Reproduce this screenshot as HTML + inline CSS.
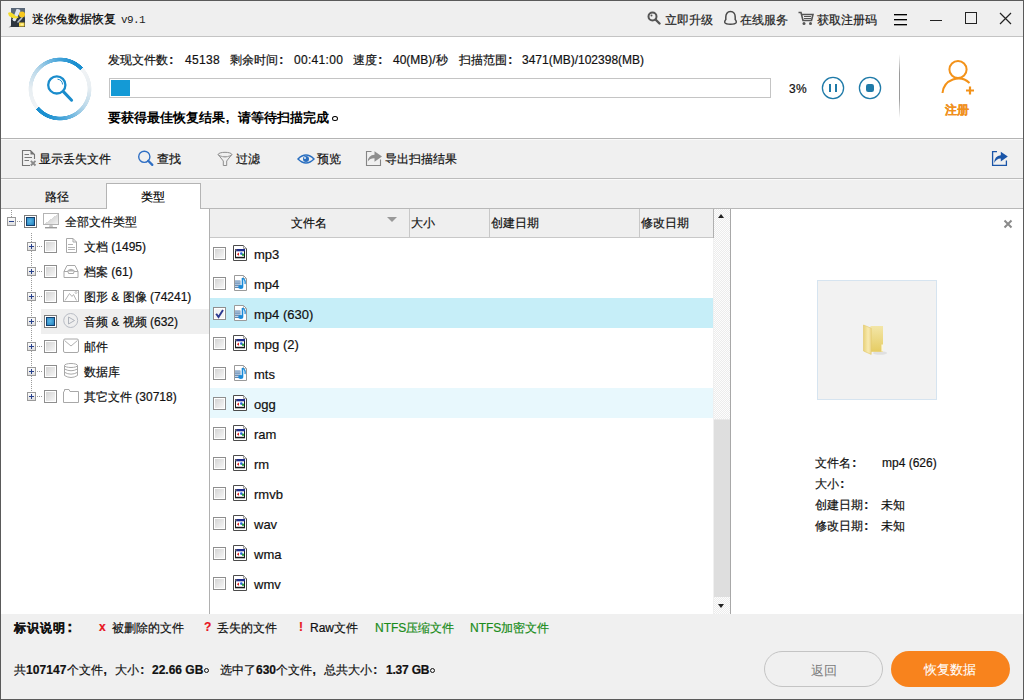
<!DOCTYPE html>
<html><head><meta charset="utf-8">
<style>
*{margin:0;padding:0;box-sizing:border-box}
html,body{width:1024px;height:700px;overflow:hidden;background:#f0f0f0}
body{position:relative;font-family:"Liberation Sans",sans-serif;font-size:12px;color:#111;-webkit-text-stroke:0.2px currentColor}
.a{position:absolute}
.t{position:absolute;white-space:nowrap;line-height:1}
.cb{position:absolute;width:13px;height:13px;border:1px solid #8f8f8f;background:linear-gradient(135deg,#dcdcdc,#fafafa)}
.cb::after{content:"";position:absolute;left:1px;top:1px;right:1px;bottom:1px;border:1px solid #f4f4f4}

.eb{position:absolute;width:9px;height:9px;border:1px solid #9a9a9a;background:linear-gradient(#fdfdfd,#dedede)}
.eb i{position:absolute;left:1px;top:3px;width:5px;height:1px;background:#27408b}
.eb b{position:absolute;left:3px;top:1px;width:1px;height:5px;background:#27408b}
.dv{position:absolute;width:1px;background:repeating-linear-gradient(#9a9a9a 0 1px,transparent 1px 2px)}
.dh{position:absolute;height:1px;background:repeating-linear-gradient(90deg,#9a9a9a 0 1px,transparent 1px 2px)}
.cbx{position:absolute;width:13px;height:13px;border:1px solid #8e8e8e;background:#fff}
.cbx::after{content:"";position:absolute;left:1px;top:1px;width:9px;height:9px;background:linear-gradient(135deg,#d4d4d4,#f6f6f6)}
.cbx.on::after{background:radial-gradient(circle at 45% 45%,#5ab8e8,#2a86c0 70%,#1d5f96);box-shadow:inset 0 0 0 1px #16406e}
.cbx.on{border-color:#7a7a7a}
.cbx.on2::after{background:#f4f4f4}
.tx{position:absolute;white-space:nowrap;line-height:1;font-size:12px;color:#111}
.row{position:absolute;left:210px;width:503px;height:30px}
.cl{display:inline-block;width:1em;padding-left:0.1em;font-weight:bold;font-family:"Liberation Sans",sans-serif}
.cm{display:inline-block;width:1em;padding-left:0.05em;font-weight:bold;font-family:"Liberation Sans",sans-serif}
</style></head><body>
<!-- window border -->
<div class="a" style="left:0;top:0;width:1024px;height:700px;border:1px solid #5a5a5a;z-index:50;pointer-events:none"></div>

<!-- title bar -->
<div class="a" style="left:0;top:0;width:1024px;height:36px;background:#efefef"></div>
<div class="a" style="left:0;top:36px;width:1024px;height:1px;background:#c4c4c4"></div>

<!-- header -->
<div class="a" style="left:0;top:37px;width:1024px;height:101px;background:#fff"></div>
<div class="a" style="left:0;top:138px;width:1024px;height:1px;background:#b4b4b4"></div>

<!-- toolbar -->
<div class="a" style="left:0;top:139px;width:1024px;height:39px;background:#f0f0f0"></div>
<div class="a" style="left:0;top:139px;width:1024px;height:1px;background:#fafafa"></div>
<div class="a" style="left:0;top:178px;width:1024px;height:1px;background:#bcbcbc"></div>

<!-- tabs -->
<div class="a" style="left:0;top:179px;width:1024px;height:1px;background:#fafafa"></div>
<div class="a" style="left:106px;top:183px;width:95px;height:26px;background:#fff;border:1px solid #b4b4b4;border-bottom:none;z-index:2"></div>

<!-- panels -->
<div class="a" style="left:0;top:208px;width:1024px;height:1px;background:#b8b8b8"></div>
<div class="a" style="left:1px;top:209px;width:208px;height:405px;background:#fff"></div>
<div class="a" style="left:209px;top:209px;width:1px;height:405px;background:#b0b0b0"></div>
<div class="a" style="left:210px;top:209px;width:503px;height:405px;background:#fff"></div>
<div class="a" style="left:210px;top:209px;width:503px;height:28px;background:#efefef"></div>
<div class="a" style="left:210px;top:237px;width:503px;height:1px;background:#c8c8c8"></div>
<div class="a" style="left:714px;top:209px;width:16px;height:405px;background:repeating-conic-gradient(#fdfdfd 0 25%,#ececec 0 50%) 0 0/2px 2px"></div>
<div class="a" style="left:730px;top:209px;width:1px;height:405px;background:#a8a8a8"></div>
<div class="a" style="left:731px;top:209px;width:292px;height:405px;background:#fff"></div>


<!-- ===== TITLE BAR ===== -->
<div class="a" id="appicon" style="left:8px;top:8px;width:18px;height:20px">
<svg width="18" height="20" viewBox="0 0 18 20">
<rect x="3" y="0" width="14" height="19" fill="#2e3640"/>
<path d="M3 0 L17 0 L17 10 Q12 4 5 8 L3 12 Z" fill="#5a6878"/>
<path d="M8.5 1 Q12 0.5 12.5 3 L7.5 13 Q5 14 4.5 11.5 Z" fill="#dfe4ee"/>
<path d="M9 14 L14.5 8 Q15.5 9 14 11 L10 15 Z" fill="#b8c2cc"/>
<path d="M0 5 Q2 3.5 4 5 Q7 8 11 9 L8.5 10.5 Q4 10.5 1 8 Z" fill="#f4dc2a"/>
<circle cx="14" cy="6.5" r="3" fill="#f8c81e"/>
<rect x="11" y="14.5" width="5.5" height="4" fill="#f8d43a"/>
<rect x="12.5" y="15.5" width="3" height="2" fill="#fff3a0"/>
<path d="M0.5 19.5 L3 17.5 L3 19 Z" fill="#777"/>
</svg></div>
<div class="t" id="title" style="left:32px;top:13px;font-size:12px;color:#000">迷你兔数据恢复 </div><div class="t" style="left:121px;top:15px;font-family:'Liberation Mono',monospace;font-size:11px;-webkit-text-stroke:0;color:#222;letter-spacing:-0.6px">v9.1</div>

<div class="a" style="left:647px;top:11px;width:14px;height:14px">
<svg width="14" height="14" viewBox="0 0 14 14"><circle cx="5.5" cy="5.5" r="4" fill="none" stroke="#555" stroke-width="2"/><path d="M8.5 8.5 L12.5 12.5" stroke="#555" stroke-width="2.4" stroke-linecap="round"/><circle cx="4.5" cy="4.5" r="1" fill="#555"/></svg></div>
<div class="t" style="left:665px;top:14px;color:#222">立即升级</div>
<div class="a" style="left:723px;top:10px;width:15px;height:16px">
<svg width="15" height="16" viewBox="0 0 15 16"><path d="M7.5 1.6 C4.2 1.6 2.8 4.2 2.8 7 L2.8 9.6 C1.9 10.6 1.4 11.6 1.8 12.6 C2.6 14 4.5 14.2 7.5 14.2 C10.5 14.2 12.4 14 13.2 12.6 C13.6 11.6 13.1 10.6 12.2 9.6 L12.2 7 C12.2 4.2 10.8 1.6 7.5 1.6 Z" fill="none" stroke="#4a4a4a" stroke-width="1.5"/></svg></div>
<div class="t" style="left:740px;top:14px;color:#222">在线服务</div>
<div class="a" style="left:798px;top:11px;width:16px;height:15px">
<svg width="16" height="15" viewBox="0 0 16 15"><path d="M0.5 1.5 L3 1.5 L5 9.5 L13.5 9.5 L15 3.5 L4 3.5" fill="none" stroke="#555" stroke-width="1.6"/><path d="M6 5.5 L13 5.5 M6 7.5 L13 7.5" stroke="#555" stroke-width="1.2"/><circle cx="6" cy="12.5" r="1.5" fill="#555"/><circle cx="12.5" cy="12.5" r="1.5" fill="#555"/></svg></div>
<div class="t" style="left:817px;top:14px;color:#222">获取注册码</div>

<div class="a" style="left:894px;top:14px;width:13px;height:2px;background:linear-gradient(#000 0 50%,#999 50%)"></div>
<div class="a" style="left:894px;top:19px;width:13px;height:2px;background:linear-gradient(#000 0 50%,#999 50%)"></div>
<div class="a" style="left:894px;top:24px;width:13px;height:2px;background:linear-gradient(#000 0 50%,#999 50%)"></div>
<div class="a" style="left:930px;top:20px;width:12px;height:1px;background:#222"></div>
<div class="a" style="left:965px;top:12px;width:12px;height:12px;border:1px solid #222"></div>
<div class="a" style="left:999px;top:12px;width:13px;height:13px">
<svg width="13" height="13" viewBox="0 0 13 13"><path d="M1 1 L12 12 M12 1 L1 12" stroke="#222" stroke-width="1.2"/></svg></div>

<!-- ===== HEADER ===== -->
<div class="a" style="left:27px;top:56px;width:66px;height:66px;border-radius:50%;background:conic-gradient(from 47deg,#f2f4f6 0deg,#e8eef2 40deg,#b9d8ea 80deg,#4aa6da 125deg,#1a8fd0 160deg,#1a8fd0 183deg,#f2f4f6 183deg,#e8eef2 223deg,#b9d8ea 263deg,#4aa6da 308deg,#1a8fd0 343deg,#1a8fd0 360deg);-webkit-mask:radial-gradient(circle at 50% 50%,transparent 0 27.3px,#000 27.8px 31.2px,transparent 31.7px)"></div>
<div class="a" style="left:27px;top:56px;width:66px;height:66px">
<svg width="66" height="66" viewBox="0 0 66 66">
<circle cx="29.8" cy="28.9" r="8.6" fill="none" stroke="#1a8ccc" stroke-width="2.3"/>
<path d="M30.5 23.2 A5.8 5.8 0 0 1 35.6 28.5" fill="none" stroke="#1a8ccc" stroke-width="1"/>
<path d="M36.4 35.6 L44.6 44.2" stroke="#1a8ccc" stroke-width="3" stroke-linecap="round"/>
</svg></div>

<div class="t" style="left:108px;top:54px;font-size:12px">发现文件数<span class="cl">:</span></div>
<div class="t" style="left:185px;top:54px;font-size:12px;letter-spacing:0.3px">45138</div>
<div class="t" style="left:230px;top:54px;font-size:12px">剩余时间<span class="cl">:</span></div>
<div class="t" style="left:294px;top:54px;font-size:12px;letter-spacing:0.3px">00:41:00</div>
<div class="t" style="left:353px;top:54px;font-size:12px">速度<span class="cl">:</span></div>
<div class="t" style="left:393px;top:54px;font-size:12px">40(MB)/秒</div>
<div class="t" style="left:459px;top:54px;font-size:12px">扫描范围<span class="cl">:</span></div>
<div class="t" style="left:522px;top:54px;font-size:12px">3471(MB)/102398(MB)</div>

<div class="a" style="left:109px;top:78px;width:662px;height:20px;border:1px solid #c4c4c4;background:#fff"></div>
<div class="a" style="left:111px;top:80px;width:19px;height:16px;background:#149ad6"></div>
<div class="t" style="left:789px;top:83px;font-size:12px;letter-spacing:0.3px">3%</div>

<div class="a" style="left:821px;top:76px;width:24px;height:24px">
<svg width="24" height="24" viewBox="0 0 24 24"><circle cx="12" cy="12" r="10.6" fill="none" stroke="#1f7aa8" stroke-width="1.3"/><rect x="8" y="8" width="2" height="8" fill="#1f7aa8"/><rect x="14" y="8" width="2" height="8" fill="#1f7aa8"/></svg></div>
<div class="a" style="left:858px;top:76px;width:24px;height:24px">
<svg width="24" height="24" viewBox="0 0 24 24"><circle cx="12" cy="12" r="10.6" fill="none" stroke="#1f7aa8" stroke-width="1.3"/><rect x="8" y="8" width="8" height="8" rx="2.2" fill="#1f7aa8"/></svg></div>

<div class="a" style="left:899px;top:54px;width:1px;height:64px;background:linear-gradient(#fff,#9a9a9a 30%,#9a9a9a 70%,#fff)"></div>

<div class="a" style="left:940px;top:58px;width:36px;height:38px">
<svg width="36" height="38" viewBox="0 0 36 38"><circle cx="18" cy="11.5" r="8.6" fill="none" stroke="#f39219" stroke-width="2"/><path d="M2.5 35 A 16 16 0 0 1 29.5 25" fill="none" stroke="#f39219" stroke-width="2"/><path d="M26 32.5 L34 32.5 M30 28.5 L30 36.5" stroke="#f39219" stroke-width="2.2"/></svg></div>
<div class="t" style="left:945px;top:104px;font-size:12px;font-weight:bold;color:#f0901c">注册</div>

<div class="t" style="left:108px;top:111px;font-size:13px;font-weight:bold;color:#000;-webkit-text-stroke:0">要获得最佳恢复结果<span class="cm">,</span>请等待扫描完成</div><div class="a" style="left:332px;top:116px;width:5.5px;height:5px;border:1.8px solid #000;border-radius:50%"></div>


<!-- ===== TOOLBAR ===== -->
<div class="a" style="left:21px;top:149px;width:17px;height:18px"><svg width="17" height="18" viewBox="0 0 17 18"><path d="M13.5 10 L13.5 5.5 L9.5 1.5 L1.5 1.5 L1.5 16.5 L9 16.5" fill="none" stroke="#747474" stroke-width="1.1"/><path d="M9.5 1.5 L13.5 5.5 L9.5 5.5 Z" fill="#747474"/><path d="M3.5 5.5 L8 5.5 M3.5 8.5 L11 8.5 M3.5 11.5 L8 11.5" stroke="#7a7a7a" stroke-width="1"/><path d="M9.8 11.8 L14.5 16.5 M14.5 11.8 L9.8 16.5" stroke="#8a8a8a" stroke-width="1.8"/></svg></div>
<div class="t" style="left:39px;top:153px">显示丢失文件</div>
<div class="a" style="left:137px;top:150px;width:17px;height:17px"><svg width="17" height="17" viewBox="0 0 17 17"><circle cx="7.3" cy="6.8" r="5.6" fill="none" stroke="#2f6fc4" stroke-width="1.4"/><path d="M11.2 10.8 L15.3 14.9" stroke="#2f6fc4" stroke-width="2.3" stroke-linecap="round"/></svg></div>
<div class="t" style="left:157px;top:153px">查找</div>
<div class="a" style="left:217px;top:151px;width:16px;height:16px"><svg width="16" height="16" viewBox="0 0 16 16"><ellipse cx="8" cy="3.5" rx="6.8" ry="2.2" fill="none" stroke="#8e8e8e" stroke-width="1"/><path d="M1.2 3.5 L6.3 10 L6.3 14.5 L9.7 14.5 L9.7 10 L14.8 3.5" fill="none" stroke="#8e8e8e" stroke-width="1"/><path d="M3 5 Q8 7.5 13 5" fill="none" stroke="#b8b8b8" stroke-width="0.8"/></svg></div>
<div class="t" style="left:236px;top:153px">过滤</div>
<div class="a" style="left:297px;top:153px;width:18px;height:12px">
<svg width="18" height="12" viewBox="0 0 18 12"><path d="M1 6 Q9 -2 17 6 Q9 14 1 6 Z" fill="none" stroke="#2a6fc0" stroke-width="1.5"/><circle cx="9" cy="6" r="3" fill="#2a6fc0"/><circle cx="8" cy="5" r="0.9" fill="#fff"/></svg></div>
<div class="t" style="left:317px;top:153px">预览</div>
<div class="a" style="left:365px;top:150px;width:18px;height:17px"><svg width="18" height="17" viewBox="0 0 18 17"><path d="M6.5 1.5 L1.5 1.5 L1.5 15.5 L15.5 15.5 L15.5 9.5" fill="none" stroke="#858585" stroke-width="1.1"/><path d="M2.8 11.5 Q3.2 5.2 9.5 4.8 L9.5 1.2 L17 6.5 L9.5 11.8 L9.5 8.2 Q5.2 8 2.8 11.5 Z" fill="#8e8e8e"/></svg></div>
<div class="t" style="left:385px;top:153px">导出扫描结果</div>
<div class="a" style="left:991px;top:150px;width:18px;height:17px"><svg width="18" height="17" viewBox="0 0 18 17"><path d="M6 1.6 L1.6 1.6 L1.6 15.4 L15.4 15.4 L15.4 10.5" fill="none" stroke="#1a55a8" stroke-width="1.3"/><path d="M3.2 13 Q3.4 5.8 9.8 5.2 L9.8 1.8 L16.8 6.6 L9.8 11.6 L9.8 8.4 Q5.6 8.2 3.2 13 Z" fill="#1a55a8"/></svg></div>

<!-- ===== TABS ===== -->
<div class="t" style="left:45px;top:191px">路径</div>
<div class="t" style="left:141px;top:191px;color:#000;z-index:3">类型</div>


<!-- ===== TREE ===== -->
<div class="a" style="left:41px;top:309px;width:168px;height:25px;background:#efefef"></div>
<div class="dv" style="left:11px;top:210px;height:7px"></div>
<div class="eb" style="left:7px;top:217px"><i></i></div>
<div class="dh" style="left:17px;top:221px;height:1px;width:6px"></div>
<div class="cbx on" style="left:24px;top:215px"></div>
<div class="a" style="left:43px;top:213px;width:16px;height:16px"><svg width="16" height="16" viewBox="0 0 16 16"><defs><linearGradient id="mg" x1="0" y1="0" x2="1" y2="1"><stop offset="0" stop-color="#fff"/><stop offset="0.5" stop-color="#fff"/><stop offset="0.5" stop-color="#d8d8d8"/><stop offset="1" stop-color="#f4f4f4"/></linearGradient></defs><rect x="0.5" y="0.5" width="15" height="11" fill="url(#mg)" stroke="#b4b4b4"/><path d="M6.5 12 L9.5 12 L10 14 L6 14 Z" fill="#c8c8c8"/><rect x="2" y="14" width="12" height="1.4" fill="#9a9a9a"/></svg></div>
<div class="tx" style="left:65px;top:216px">全部文件类型</div>
<div class="eb" style="left:27px;top:242px"><i></i><b></b></div>
<div class="dh" style="left:37px;top:246px;width:5px"></div>
<div class="cbx" style="left:44px;top:240px"></div>
<div class="a" style="left:63px;top:238px;width:16px;height:16px"><svg width="16" height="16" viewBox="0 0 16 16"><path d="M3.5 0.5 L10 0.5 L13.5 4 L13.5 14.5 L3.5 14.5 Z" fill="#fff" stroke="#a8a8a8"/><path d="M10 0.5 L10 4 L13.5 4" fill="none" stroke="#a8a8a8"/><path d="M5 6.5 L10 6.5 M5 9.5 L12 9.5 M5 11.5 L12 11.5" stroke="#b4b4b4"/></svg></div>
<div class="tx" style="left:84px;top:241px">文档 (1495)</div>
<div class="eb" style="left:27px;top:267px"><i></i><b></b></div>
<div class="dh" style="left:37px;top:271px;width:5px"></div>
<div class="cbx" style="left:44px;top:265px"></div>
<div class="a" style="left:63px;top:263px;width:16px;height:16px"><svg width="16" height="16" viewBox="0 0 16 16"><path d="M4 2.5 L12 2.5 L15 8.5 L15 14.5 L1 14.5 L1 8.5 Z" fill="#fff" stroke="#a8a8a8"/><path d="M3.5 8.5 Q8 3 12.5 8.5 Z" fill="#b4b4b4"/><path d="M1 8.5 L5 8.5 L5.5 10.5 L10.5 10.5 L11 8.5 L15 8.5" fill="none" stroke="#a8a8a8"/></svg></div>
<div class="tx" style="left:84px;top:266px">档案 (61)</div>
<div class="eb" style="left:27px;top:292px"><i></i><b></b></div>
<div class="dh" style="left:37px;top:296px;width:5px"></div>
<div class="cbx" style="left:44px;top:290px"></div>
<div class="a" style="left:63px;top:288px;width:16px;height:16px"><svg width="16" height="16" viewBox="0 0 16 16"><rect x="0.5" y="2.5" width="15" height="11" fill="#fff" stroke="#a8a8a8"/><path d="M2 12.5 L6.5 5.5 L9 8.5 L10.5 6.5 L13.5 12.5" fill="none" stroke="#b4b4b4"/><circle cx="13" cy="4.5" r="1" fill="none" stroke="#b4b4b4" stroke-width="0.8"/></svg></div>
<div class="tx" style="left:84px;top:291px">图形 &amp; 图像 (74241)</div>
<div class="eb" style="left:27px;top:317px"><i></i><b></b></div>
<div class="dh" style="left:37px;top:321px;width:5px"></div>
<div class="cbx on" style="left:44px;top:315px"></div>
<div class="a" style="left:63px;top:313px;width:16px;height:16px"><svg width="16" height="16" viewBox="0 0 16 16"><circle cx="7.7" cy="7.5" r="7" fill="none" stroke="#b8bcc4" stroke-width="1"/><path d="M5.5 4 L11.5 7.5 L5.5 11 Z" fill="none" stroke="#b0b4bc" stroke-width="1"/></svg></div>
<div class="tx" style="left:84px;top:316px">音频 &amp; 视频 (632)</div>
<div class="eb" style="left:27px;top:342px"><i></i><b></b></div>
<div class="dh" style="left:37px;top:346px;width:5px"></div>
<div class="cbx" style="left:44px;top:340px"></div>
<div class="a" style="left:63px;top:338px;width:16px;height:16px"><svg width="16" height="16" viewBox="0 0 16 16"><rect x="0.5" y="1" width="15" height="13.5" rx="1.5" fill="#fff" stroke="#a8a8a8"/><path d="M1.5 2.5 L8 8 L14.5 2.5" fill="none" stroke="#b0b0b0"/></svg></div>
<div class="tx" style="left:84px;top:341px">邮件</div>
<div class="eb" style="left:27px;top:367px"><i></i><b></b></div>
<div class="dh" style="left:37px;top:371px;width:5px"></div>
<div class="cbx" style="left:44px;top:365px"></div>
<div class="a" style="left:63px;top:363px;width:16px;height:16px"><svg width="16" height="16" viewBox="0 0 16 16"><ellipse cx="8" cy="2.5" rx="6.5" ry="2" fill="#fff" stroke="#a8a8a8"/><path d="M1.5 2.5 L1.5 12.5 Q8 16.5 14.5 12.5 L14.5 2.5 M1.5 6 Q8 9.5 14.5 6 M1.5 9.3 Q8 13 14.5 9.3" fill="none" stroke="#a8a8a8"/></svg></div>
<div class="tx" style="left:84px;top:366px">数据库</div>
<div class="eb" style="left:27px;top:392px"><i></i><b></b></div>
<div class="dh" style="left:37px;top:396px;width:5px"></div>
<div class="cbx" style="left:44px;top:390px"></div>
<div class="a" style="left:63px;top:388px;width:16px;height:16px"><svg width="16" height="16" viewBox="0 0 16 16"><path d="M0.5 3.5 L0.5 14.5 L15.5 14.5 L15.5 3.5 L7 3.5 L6 1.5 L1.5 1.5 L1.5 3.5" fill="#fff" stroke="#a8a8a8"/></svg></div>
<div class="tx" style="left:84px;top:391px">其它文件 (30718)</div>
<div class="dv" style="left:31px;top:233px;height:9px"></div>
<div class="dv" style="left:31px;top:251px;height:16px"></div>
<div class="dv" style="left:31px;top:276px;height:16px"></div>
<div class="dv" style="left:31px;top:301px;height:16px"></div>
<div class="dv" style="left:31px;top:326px;height:16px"></div>
<div class="dv" style="left:31px;top:351px;height:16px"></div>
<div class="dv" style="left:31px;top:376px;height:16px"></div>

<!-- ===== LIST ===== -->
<div class="row" style="top:298px;background:#c6eef8"></div>
<div class="row" style="top:388px;background:#e8f8fd"></div>
<div class="a" style="left:409px;top:209px;width:1px;height:28px;background:#c8c8c8"></div>
<div class="a" style="left:489px;top:209px;width:1px;height:28px;background:#c8c8c8"></div>
<div class="a" style="left:639px;top:209px;width:1px;height:28px;background:#c8c8c8"></div>
<div class="a" style="left:713px;top:209px;width:1px;height:29px;background:#b0b0b0"></div>
<div class="tx" style="left:291px;top:217px">文件名</div>
<div class="a" style="left:387px;top:217px;width:0;height:0;border-left:5px solid transparent;border-right:5px solid transparent;border-top:5px solid #999"></div>
<div class="tx" style="left:411px;top:217px">大小</div>
<div class="tx" style="left:491px;top:217px">创建日期</div>
<div class="tx" style="left:641px;top:217px">修改日期</div>
<div class="cbx" style="left:213px;top:247px"></div>
<div class="a" style="left:232px;top:245px;width:16px;height:17px"><svg width="16" height="17" viewBox="0 0 16 17"><path d="M1.5 0.5 L11.5 0.5 L14.5 3.5 L14.5 15.5 L1.5 15.5 Z" fill="#fff" stroke="#4a4a4a"/><path d="M11.5 0.5 L11.5 3.5 L14.5 3.5" fill="#e8e8e8" stroke="#888" stroke-width="0.8"/><rect x="3.5" y="4.5" width="9" height="8" fill="#fff" stroke="#1a1a1a" stroke-width="1"/><rect x="3" y="4" width="10" height="2.3" fill="#1c2a8a"/><rect x="3" y="11.8" width="10" height="1.5" fill="#1a1a1a"/><path d="M4.8 9.2 L7 7.6 L7 10.8 Z" fill="#d42020"/><circle cx="9.3" cy="8.6" r="1.3" fill="#2a62d8"/><circle cx="11" cy="9.8" r="1.2" fill="#28a040"/><rect x="3.5" y="4.5" width="1" height="1" fill="#fc0"/></svg></div>
<div class="tx" style="left:254px;top:248px;font-size:13px">mp3</div>
<div class="cbx" style="left:213px;top:277px"></div>
<div class="a" style="left:232px;top:275px;width:16px;height:17px"><svg width="16" height="17" viewBox="0 0 16 17"><path d="M2.5 0.5 L11.5 0.5 L14.5 3.5 L14.5 15.5 L2.5 15.5 Z" fill="#fff" stroke="#9a9a9a"/><path d="M11.5 0.5 L11.5 3.5 L14.5 3.5" fill="none" stroke="#aaa" stroke-width="0.8"/><rect x="3" y="5.5" width="5.5" height="7.5" fill="#5f86b0"/><path d="M3 7 L8.5 7 M3 9.2 L8.5 9.2 M3 11.4 L8.5 11.4" stroke="#dce8f4" stroke-width="0.9"/><path d="M10.5 3 L10.5 11.5" stroke="#1a8ad8" stroke-width="1.6"/><ellipse cx="8.8" cy="12" rx="2.6" ry="2.1" fill="#1a8ad8"/><path d="M10.5 3 Q14 5 13 9" fill="none" stroke="#1a8ad8" stroke-width="1.3"/></svg></div>
<div class="tx" style="left:254px;top:278px;font-size:13px">mp4</div>
<div class="cbx on2" style="left:213px;top:307px"></div><div class="a" style="left:213px;top:307px;width:13px;height:13px"><svg width="13" height="13" viewBox="0 0 13 13"><path d="M3.2 6.8 L5.5 10 L10 3" fill="none" stroke="#2b3990" stroke-width="1.9"/></svg></div>
<div class="a" style="left:232px;top:305px;width:16px;height:17px"><svg width="16" height="17" viewBox="0 0 16 17"><path d="M2.5 0.5 L11.5 0.5 L14.5 3.5 L14.5 15.5 L2.5 15.5 Z" fill="#fff" stroke="#9a9a9a"/><path d="M11.5 0.5 L11.5 3.5 L14.5 3.5" fill="none" stroke="#aaa" stroke-width="0.8"/><rect x="3" y="5.5" width="5.5" height="7.5" fill="#5f86b0"/><path d="M3 7 L8.5 7 M3 9.2 L8.5 9.2 M3 11.4 L8.5 11.4" stroke="#dce8f4" stroke-width="0.9"/><path d="M10.5 3 L10.5 11.5" stroke="#1a8ad8" stroke-width="1.6"/><ellipse cx="8.8" cy="12" rx="2.6" ry="2.1" fill="#1a8ad8"/><path d="M10.5 3 Q14 5 13 9" fill="none" stroke="#1a8ad8" stroke-width="1.3"/></svg></div>
<div class="tx" style="left:254px;top:308px;font-size:13px">mp4 (630)</div>
<div class="cbx" style="left:213px;top:337px"></div>
<div class="a" style="left:232px;top:335px;width:16px;height:17px"><svg width="16" height="17" viewBox="0 0 16 17"><path d="M1.5 0.5 L11.5 0.5 L14.5 3.5 L14.5 15.5 L1.5 15.5 Z" fill="#fff" stroke="#4a4a4a"/><path d="M11.5 0.5 L11.5 3.5 L14.5 3.5" fill="#e8e8e8" stroke="#888" stroke-width="0.8"/><rect x="3.5" y="4.5" width="9" height="8" fill="#fff" stroke="#1a1a1a" stroke-width="1"/><rect x="3" y="4" width="10" height="2.3" fill="#1c2a8a"/><rect x="3" y="11.8" width="10" height="1.5" fill="#1a1a1a"/><path d="M4.8 9.2 L7 7.6 L7 10.8 Z" fill="#d42020"/><circle cx="9.3" cy="8.6" r="1.3" fill="#2a62d8"/><circle cx="11" cy="9.8" r="1.2" fill="#28a040"/><rect x="3.5" y="4.5" width="1" height="1" fill="#fc0"/></svg></div>
<div class="tx" style="left:254px;top:338px;font-size:13px">mpg (2)</div>
<div class="cbx" style="left:213px;top:367px"></div>
<div class="a" style="left:232px;top:365px;width:16px;height:17px"><svg width="16" height="17" viewBox="0 0 16 17"><path d="M2.5 0.5 L11.5 0.5 L14.5 3.5 L14.5 15.5 L2.5 15.5 Z" fill="#fff" stroke="#9a9a9a"/><path d="M11.5 0.5 L11.5 3.5 L14.5 3.5" fill="none" stroke="#aaa" stroke-width="0.8"/><rect x="3" y="5.5" width="5.5" height="7.5" fill="#5f86b0"/><path d="M3 7 L8.5 7 M3 9.2 L8.5 9.2 M3 11.4 L8.5 11.4" stroke="#dce8f4" stroke-width="0.9"/><path d="M10.5 3 L10.5 11.5" stroke="#1a8ad8" stroke-width="1.6"/><ellipse cx="8.8" cy="12" rx="2.6" ry="2.1" fill="#1a8ad8"/><path d="M10.5 3 Q14 5 13 9" fill="none" stroke="#1a8ad8" stroke-width="1.3"/></svg></div>
<div class="tx" style="left:254px;top:368px;font-size:13px">mts</div>
<div class="cbx" style="left:213px;top:397px"></div>
<div class="a" style="left:232px;top:395px;width:16px;height:17px"><svg width="16" height="17" viewBox="0 0 16 17"><path d="M1.5 0.5 L11.5 0.5 L14.5 3.5 L14.5 15.5 L1.5 15.5 Z" fill="#fff" stroke="#4a4a4a"/><path d="M11.5 0.5 L11.5 3.5 L14.5 3.5" fill="#e8e8e8" stroke="#888" stroke-width="0.8"/><rect x="3.5" y="4.5" width="9" height="8" fill="#fff" stroke="#1a1a1a" stroke-width="1"/><rect x="3" y="4" width="10" height="2.3" fill="#1c2a8a"/><rect x="3" y="11.8" width="10" height="1.5" fill="#1a1a1a"/><path d="M4.8 9.2 L7 7.6 L7 10.8 Z" fill="#d42020"/><circle cx="9.3" cy="8.6" r="1.3" fill="#2a62d8"/><circle cx="11" cy="9.8" r="1.2" fill="#28a040"/><rect x="3.5" y="4.5" width="1" height="1" fill="#fc0"/></svg></div>
<div class="tx" style="left:254px;top:398px;font-size:13px">ogg</div>
<div class="cbx" style="left:213px;top:427px"></div>
<div class="a" style="left:232px;top:425px;width:16px;height:17px"><svg width="16" height="17" viewBox="0 0 16 17"><path d="M1.5 0.5 L11.5 0.5 L14.5 3.5 L14.5 15.5 L1.5 15.5 Z" fill="#fff" stroke="#4a4a4a"/><path d="M11.5 0.5 L11.5 3.5 L14.5 3.5" fill="#e8e8e8" stroke="#888" stroke-width="0.8"/><rect x="3.5" y="4.5" width="9" height="8" fill="#fff" stroke="#1a1a1a" stroke-width="1"/><rect x="3" y="4" width="10" height="2.3" fill="#1c2a8a"/><rect x="3" y="11.8" width="10" height="1.5" fill="#1a1a1a"/><path d="M4.8 9.2 L7 7.6 L7 10.8 Z" fill="#d42020"/><circle cx="9.3" cy="8.6" r="1.3" fill="#2a62d8"/><circle cx="11" cy="9.8" r="1.2" fill="#28a040"/><rect x="3.5" y="4.5" width="1" height="1" fill="#fc0"/></svg></div>
<div class="tx" style="left:254px;top:428px;font-size:13px">ram</div>
<div class="cbx" style="left:213px;top:457px"></div>
<div class="a" style="left:232px;top:455px;width:16px;height:17px"><svg width="16" height="17" viewBox="0 0 16 17"><path d="M1.5 0.5 L11.5 0.5 L14.5 3.5 L14.5 15.5 L1.5 15.5 Z" fill="#fff" stroke="#4a4a4a"/><path d="M11.5 0.5 L11.5 3.5 L14.5 3.5" fill="#e8e8e8" stroke="#888" stroke-width="0.8"/><rect x="3.5" y="4.5" width="9" height="8" fill="#fff" stroke="#1a1a1a" stroke-width="1"/><rect x="3" y="4" width="10" height="2.3" fill="#1c2a8a"/><rect x="3" y="11.8" width="10" height="1.5" fill="#1a1a1a"/><path d="M4.8 9.2 L7 7.6 L7 10.8 Z" fill="#d42020"/><circle cx="9.3" cy="8.6" r="1.3" fill="#2a62d8"/><circle cx="11" cy="9.8" r="1.2" fill="#28a040"/><rect x="3.5" y="4.5" width="1" height="1" fill="#fc0"/></svg></div>
<div class="tx" style="left:254px;top:458px;font-size:13px">rm</div>
<div class="cbx" style="left:213px;top:487px"></div>
<div class="a" style="left:232px;top:485px;width:16px;height:17px"><svg width="16" height="17" viewBox="0 0 16 17"><path d="M1.5 0.5 L11.5 0.5 L14.5 3.5 L14.5 15.5 L1.5 15.5 Z" fill="#fff" stroke="#4a4a4a"/><path d="M11.5 0.5 L11.5 3.5 L14.5 3.5" fill="#e8e8e8" stroke="#888" stroke-width="0.8"/><rect x="3.5" y="4.5" width="9" height="8" fill="#fff" stroke="#1a1a1a" stroke-width="1"/><rect x="3" y="4" width="10" height="2.3" fill="#1c2a8a"/><rect x="3" y="11.8" width="10" height="1.5" fill="#1a1a1a"/><path d="M4.8 9.2 L7 7.6 L7 10.8 Z" fill="#d42020"/><circle cx="9.3" cy="8.6" r="1.3" fill="#2a62d8"/><circle cx="11" cy="9.8" r="1.2" fill="#28a040"/><rect x="3.5" y="4.5" width="1" height="1" fill="#fc0"/></svg></div>
<div class="tx" style="left:254px;top:488px;font-size:13px">rmvb</div>
<div class="cbx" style="left:213px;top:517px"></div>
<div class="a" style="left:232px;top:515px;width:16px;height:17px"><svg width="16" height="17" viewBox="0 0 16 17"><path d="M1.5 0.5 L11.5 0.5 L14.5 3.5 L14.5 15.5 L1.5 15.5 Z" fill="#fff" stroke="#4a4a4a"/><path d="M11.5 0.5 L11.5 3.5 L14.5 3.5" fill="#e8e8e8" stroke="#888" stroke-width="0.8"/><rect x="3.5" y="4.5" width="9" height="8" fill="#fff" stroke="#1a1a1a" stroke-width="1"/><rect x="3" y="4" width="10" height="2.3" fill="#1c2a8a"/><rect x="3" y="11.8" width="10" height="1.5" fill="#1a1a1a"/><path d="M4.8 9.2 L7 7.6 L7 10.8 Z" fill="#d42020"/><circle cx="9.3" cy="8.6" r="1.3" fill="#2a62d8"/><circle cx="11" cy="9.8" r="1.2" fill="#28a040"/><rect x="3.5" y="4.5" width="1" height="1" fill="#fc0"/></svg></div>
<div class="tx" style="left:254px;top:518px;font-size:13px">wav</div>
<div class="cbx" style="left:213px;top:547px"></div>
<div class="a" style="left:232px;top:545px;width:16px;height:17px"><svg width="16" height="17" viewBox="0 0 16 17"><path d="M1.5 0.5 L11.5 0.5 L14.5 3.5 L14.5 15.5 L1.5 15.5 Z" fill="#fff" stroke="#4a4a4a"/><path d="M11.5 0.5 L11.5 3.5 L14.5 3.5" fill="#e8e8e8" stroke="#888" stroke-width="0.8"/><rect x="3.5" y="4.5" width="9" height="8" fill="#fff" stroke="#1a1a1a" stroke-width="1"/><rect x="3" y="4" width="10" height="2.3" fill="#1c2a8a"/><rect x="3" y="11.8" width="10" height="1.5" fill="#1a1a1a"/><path d="M4.8 9.2 L7 7.6 L7 10.8 Z" fill="#d42020"/><circle cx="9.3" cy="8.6" r="1.3" fill="#2a62d8"/><circle cx="11" cy="9.8" r="1.2" fill="#28a040"/><rect x="3.5" y="4.5" width="1" height="1" fill="#fc0"/></svg></div>
<div class="tx" style="left:254px;top:548px;font-size:13px">wma</div>
<div class="cbx" style="left:213px;top:577px"></div>
<div class="a" style="left:232px;top:575px;width:16px;height:17px"><svg width="16" height="17" viewBox="0 0 16 17"><path d="M1.5 0.5 L11.5 0.5 L14.5 3.5 L14.5 15.5 L1.5 15.5 Z" fill="#fff" stroke="#4a4a4a"/><path d="M11.5 0.5 L11.5 3.5 L14.5 3.5" fill="#e8e8e8" stroke="#888" stroke-width="0.8"/><rect x="3.5" y="4.5" width="9" height="8" fill="#fff" stroke="#1a1a1a" stroke-width="1"/><rect x="3" y="4" width="10" height="2.3" fill="#1c2a8a"/><rect x="3" y="11.8" width="10" height="1.5" fill="#1a1a1a"/><path d="M4.8 9.2 L7 7.6 L7 10.8 Z" fill="#d42020"/><circle cx="9.3" cy="8.6" r="1.3" fill="#2a62d8"/><circle cx="11" cy="9.8" r="1.2" fill="#28a040"/><rect x="3.5" y="4.5" width="1" height="1" fill="#fc0"/></svg></div>
<div class="tx" style="left:254px;top:578px;font-size:13px">wmv</div>

<div class="a" style="left:714px;top:419px;width:16px;height:178px;background:#dedede;border-top:1px solid #e8e8e8"></div>
<div class="a" style="left:718px;top:214px;width:0;height:0;border-left:3.5px solid transparent;border-right:3.5px solid transparent;border-bottom:4px solid #222"></div>
<div class="a" style="left:718px;top:604px;width:0;height:0;border-left:3.5px solid transparent;border-right:3.5px solid transparent;border-top:4px solid #222"></div>

<!-- ===== PREVIEW ===== -->
<div class="a" style="left:1003px;top:218px;width:10px;height:10px"><svg width="10" height="10" viewBox="0 0 10 10"><path d="M1.5 1.5 L8.5 8.5 M8.5 1.5 L1.5 8.5" stroke="#8a8a8a" stroke-width="2"/></svg></div>
<div class="a" style="left:817px;top:280px;width:120px;height:120px;background:#f2f2f2;border:1px solid #d6e4f0"></div>
<div class="a" style="left:862px;top:323px;width:30px;height:34px"><svg width="30" height="34" viewBox="0 0 30 34"><defs><linearGradient id="fb" x1="0" y1="0" x2="0" y2="1"><stop offset="0" stop-color="#f3e6a8"/><stop offset="1" stop-color="#e6cc62"/></linearGradient><linearGradient id="ff" x1="0" y1="0" x2="1" y2="0"><stop offset="0" stop-color="#e9d27a"/><stop offset="0.6" stop-color="#f8eab0"/><stop offset="1" stop-color="#eed890"/></linearGradient></defs><ellipse cx="18" cy="30" rx="7" ry="1.8" fill="#d8d8d8" opacity="0.7"/><path d="M8.5 3 L21 3 L21 28.8 L8.5 28.8 Z" fill="url(#fb)"/><path d="M1.5 2 L9.2 5.2 L9.2 31.4 L1.5 28 Z" fill="url(#ff)" stroke="#e2c86a" stroke-width="0.6"/><rect x="19.5" y="21.5" width="1.4" height="7" fill="#fffbe8"/></svg></div>
<div class="tx" style="left:815px;top:457px">文件名<span class="cl">:</span></div>
<div class="tx" style="left:882px;top:457px">mp4 (626)</div>
<div class="tx" style="left:815px;top:478px">大小<span class="cl">:</span></div>
<div class="tx" style="left:815px;top:499px">创建日期<span class="cl">:</span></div>
<div class="tx" style="left:881px;top:499px">未知</div>
<div class="tx" style="left:815px;top:520px">修改日期<span class="cl">:</span></div>
<div class="tx" style="left:881px;top:520px">未知</div>

<!-- ===== LEGEND / STATUS ===== -->
<div class="tx" style="left:14px;top:622px;font-weight:bold;letter-spacing:1px">标识说明<span class="cl" style="font-size:14px;margin-top:-2px;vertical-align:top;-webkit-text-stroke:0.5px #000">:</span></div>
<div class="tx" style="left:99px;top:621px;font-weight:bold;color:#e8141e;font-size:12px">x</div>
<div class="tx" style="left:112px;top:622px">被删除的文件</div>
<div class="tx" style="left:204px;top:621px;font-weight:bold;color:#e8141e">?</div>
<div class="tx" style="left:217px;top:622px">丢失的文件</div>
<div class="tx" style="left:299px;top:621px;font-weight:bold;color:#e8141e">!</div>
<div class="tx" style="left:310px;top:622px">Raw文件</div>
<div class="tx" style="left:375px;top:622px;color:#1a8c1a">NTFS压缩文件</div>
<div class="tx" style="left:470px;top:622px;color:#1a8c1a">NTFS加密文件</div>

<div class="tx" style="left:14px;top:664px">共</div>
<div class="tx" style="left:26px;top:664px;font-weight:bold;letter-spacing:0.1px">107147</div>
<div class="tx" style="left:67px;top:664px">个文件<span class="cm">,</span>大小<span class="cl">:</span></div>
<div class="tx" style="left:152px;top:664px;font-weight:bold">22.66 GB</div>
<div class="a" style="left:204px;top:668px;width:5px;height:5px;border:1.2px solid #111;border-radius:50%"></div>
<div class="tx" style="left:220px;top:664px">选中了</div>
<div class="tx" style="left:256px;top:664px;font-weight:bold">630</div>
<div class="tx" style="left:276px;top:664px">个文件<span class="cm">,</span>总共大小<span class="cl">:</span></div>
<div class="tx" style="left:386px;top:664px;font-weight:bold;letter-spacing:-0.2px">1.37 GB</div>
<div class="a" style="left:430px;top:668px;width:5px;height:5px;border:1.2px solid #111;border-radius:50%"></div>

<div class="a" style="left:764px;top:651px;width:119px;height:36px;border:1px solid #c4c4c4;border-radius:18px"></div>
<div class="tx" style="left:811px;top:664px;font-size:13px;color:#7a7a7a;-webkit-text-stroke:0">返回</div>
<div class="a" style="left:891px;top:651px;width:119px;height:36px;background:#f8831d;border-radius:18px"></div>
<div class="tx" style="left:924px;top:663px;font-size:13px;color:#fff;-webkit-text-stroke:0.1px #fff">恢复数据</div>

</body></html>
